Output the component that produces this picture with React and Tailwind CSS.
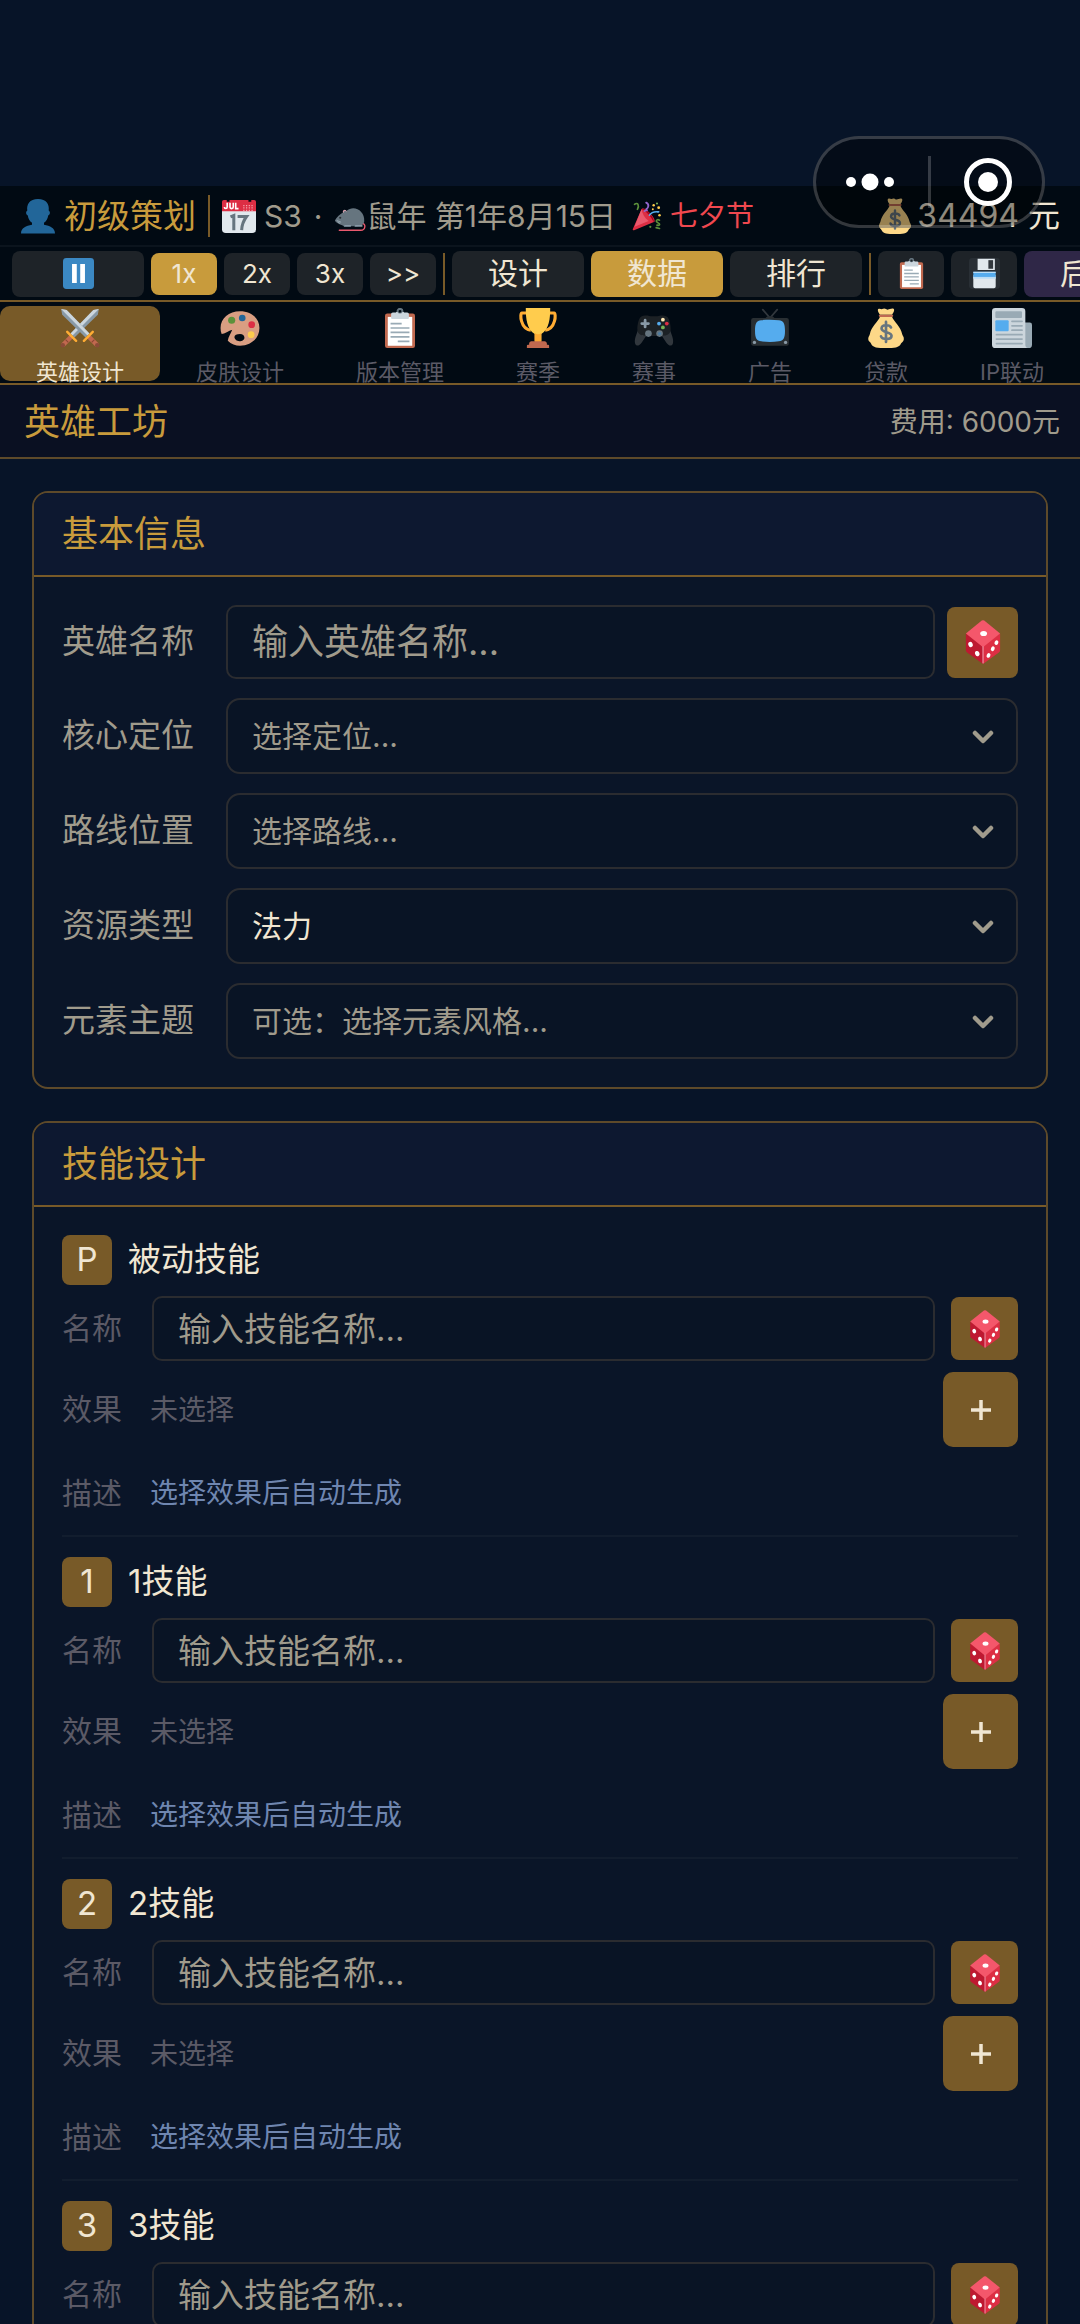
import React, { useState } from 'react';
import { clsx } from 'clsx';

const PersonIcon = ({ className }) => (
  <svg viewBox="0 0 36 36" className={className} aria-hidden="true">
    <path fill="#226699" d="M24 26.8v-2.1c2.3-1.6 3.8-4.2 4.2-7.3.9-.2 1.7-1.3 1.7-2.6 0-1-.5-1.9-1.2-2.3C29.600 6.500 26.500 1 18 1S6.400 6.500 7.300 12.500c-.7.4-1.200 1.300-1.200 2.300 0 1.300.8 2.400 1.700 2.600.4 3.100 1.900 5.700 4.200 7.300v2.100C6 28 1 30 1 35.500h34C35 30 30 28 24 26.800z" />
  </svg>
);

const CalendarIcon = ({ className }) => (
  <svg viewBox="0 0 36 36" className={className} aria-hidden="true">
    <path fill="#e1e8ed" d="M0 11h36v21a4 4 0 0 1-4 4H4a4 4 0 0 1-4-4z" />
    <path fill="#dd2e44" d="M2 1h3v2h3V1h20v2h3V1h3a2 2 0 0 1 2 2v10H0V3a2 2 0 0 1 2-2z" />
    <path fill="none" stroke="#fff" strokeWidth="1.700" d="M5.500 4v4.500a1.500 1.500 0 0 1-3 0M8.500 4v4.500a1.700 1.700 0 0 0 3.400 0V4M14.500 4v6.200h3" />
    <path stroke="#f4a3ad" strokeWidth="1.300" strokeDasharray="1.300 1.600" d="M22.500 7H34M22.500 9.500H34M22.500 12H34" />
    <path fill="none" stroke="#66757f" strokeWidth="3.200" d="M9 19l3.500-1.500V33M16.500 18.500h9.500c-3 4-5 8.500-5.200 14.500" />
  </svg>
);

const RatIcon = ({ className }) => (
  <svg viewBox="0 0 36 36" className={className} aria-hidden="true">
    <path fill="none" stroke="#ea596e" strokeWidth="1.600" strokeLinecap="round" d="M6 34h24c6 0 6-8 1.500-7.500" />
    <path fill="#66757f" d="M1 23c2-4 6-7 9-9 1-3 3-3 4-1.500C22 5 35 12 34 24c-.3 4-4 5.500-8 5.500H11C8 27 3 27 1 23z" />
    <circle cx="12" cy="13" r="2" fill="#dba2b0" />
    <circle cx="12.500" cy="14" r="1.500" fill="#66757f" />
    <circle cx="7" cy="20" r="1.200" fill="#292f33" />
    <path stroke="#99aab5" d="M3 23l5 2M4 24.500l3 2" />
    <path fill="#8899a6" d="M12 28h7v2h-8zM24 28h8v2h-9z" />
  </svg>
);

const PartyIcon = ({ className }) => (
  <svg viewBox="0 0 36 36" className={className} aria-hidden="true">
    <path fill="#dd2e44" d="M11.500 9.500L1 33.500c-.5 1.200.5 2 1.500 1.500L27 25c1-3-2-7-6-11s-7-6-9.500-4.500z" />
    <path fill="#ea596e" d="M11.500 9.500L3 31l17-7c-5-4-8-9-8.500-14.500z" />
    <path fill="#a0041e" d="M26 25.500c1-3-1.500-7.500-5.500-11.500s-8-6-9.500-4c3-.5 12 8 15 15.500z" />
    <path fill="none" stroke="#5c913b" strokeWidth="2" strokeLinecap="round" d="M3 4c4-3 6 1 3.500 6M33 23c-4-2-5 2-2 3s3 4-1 3M29 32l4 1" />
    <path fill="none" stroke="#9266cc" strokeWidth="2.200" strokeLinecap="round" d="M17 2c4 2 3 6 0 8M15 12l3-1" />
    <path fill="none" stroke="#55acee" strokeWidth="2" strokeLinecap="round" d="M21 17c3-5 7-4 11-4" />
    <g fill="#ffcc4d">
      <circle cx="26" cy="5" r="1.500" />
      <circle cx="32" cy="8" r="1.700" />
      <circle cx="25" cy="10" r="1.200" />
      <circle cx="33" cy="17" r="1.500" />
    </g>
    <circle cx="30" cy="3" r="1.300" fill="#77b255" />
    <circle cx="22" cy="31" r="1.300" fill="#5c913b" />
  </svg>
);

const MoneyIcon = ({ className }) => (
  <svg viewBox="0 0 36 36" className={className} aria-hidden="true">
    <path fill="#fdd888" d="M11 1c1.500-1 2.500.3 3.500 0s2-1 3.500 0 2.500.2 3.500 0 2.500-1 3.500 0-.5 4-1.500 5H12.500C11.500 5 10 2 11 1zM12.500 8h11c1.500 4 8 9 9 15.500.3 1.700 2 2.500 1.500 5-.4 2-1.800 2-2.500 3.500-1.500 4-6 4-13.500 4s-12 0-13.500-4C3.800 30.500 2 30 2 28s1.200-3 1.500-4.500C4.500 17 11 12 12.500 8z" />
    <path stroke="#bf6952" strokeWidth="2" strokeLinecap="round" d="M12.500 7h11" />
    <path fill="none" stroke="#67757f" strokeWidth="2.400" strokeLinecap="round" d="M22.500 17.500c-1-2.500-8.500-3-8.500 1s9 2.500 9 6.500-8.500 3.500-9.500.5M18 12.500v18" />
  </svg>
);

const ClipboardIcon = ({ className }) => (
  <svg viewBox="0 0 36 36" className={className} aria-hidden="true">
    <rect x="4.500" y="5" width="27" height="31" rx="2" fill="#c1694f" />
    <path fill="#fff" d="M7 8h22v26H7z" />
    <circle cx="18" cy="3" r="2.200" fill="none" stroke="#66757f" strokeWidth="1.800" />
    <path fill="#ccd6dd" d="M14.500 3.500h1.200a2.500 2.500 0 0 0 4.600 0h1.200V4h3a1.500 1.500 0 0 1 1.500 1.500V9a1 1 0 0 1-1 1H11a1 1 0 0 1-1-1V5.500A1.500 1.500 0 0 1 11.500 4h3z" />
    <path stroke="#99aab5" strokeWidth="1.500" d="M9.500 14h10M9.500 18h17M9.500 22h17M9.500 26h17M16 30h10.500" />
  </svg>
);

const FloppyIcon = ({ className }) => (
  <svg viewBox="0 0 36 36" className={className} aria-hidden="true">
    <path fill="#31373d" d="M4 0h28a4 4 0 0 1 4 4v28a4 4 0 0 1-4 4H4a4 4 0 0 1-4-4V4a4 4 0 0 1 4-4z" opacity=".6" />
    <path fill="#e1e8ed" d="M10 1h20v13H10zM5 20h26v13a2 2 0 0 1-2 2H7a2 2 0 0 1-2-2z" />
    <path fill="#31373d" d="M22.500 2.500H28v10h-5.500z" />
    <path fill="#55acee" d="M5 16h26v6H5z" />
    <path fill="#bbddf5" d="M5 16h26v1.500H5zM5 22h26v2H5z" />
  </svg>
);

const SwordsIcon = ({ className }) => (
  <svg viewBox="0 0 36 36" className={className} aria-hidden="true">
    {[false, true].map((flip) => (
      <g key={String(flip)} transform={flip ? 'translate(36 0) scale(-1 1)' : undefined}>
        <path fill="#8899a6" d="M35 1l-5 .8L9.500 23l3.500 3.500L34 6z" />
        <path fill="#ccd6dd" d="M35 1l-5 .8L9.500 23l1.800 1.800z" />
        <path stroke="#c1694f" strokeWidth="4" strokeLinecap="round" d="M9.500 26.500L3 33" />
        <path stroke="#ffac33" strokeWidth="2.200" strokeLinecap="round" d="M6.500 21.500l8 8" />
        <path stroke="#8a4633" strokeWidth="1" d="M5 28.500l2.500 2.500" />
        <circle cx="2.500" cy="33.500" r="2" fill="#8a4b38" />
      </g>
    ))}
  </svg>
);

const PaletteIcon = ({ className }) => (
  <svg viewBox="0 0 36 36" className={className} aria-hidden="true">
    <path fill="#d99e82" fillRule="evenodd" d="M18 3C8 3 .5 9.500.5 18c0 2 .3 3.800 1 5.500 2.500-.5 6.500-3 9.500-4-1 3-3.500 6-4 10C10 32.500 14 34 18 34c10 0 17.500-7 17.500-16S28 3 18 3zm0 20.500c2.500 0 4 1.500 4 3.200S20 30 17.500 30s-4.500-2-4.500-3.800 2-2.700 5-2.700z" />
    <circle cx="10.500" cy="11" r="3.200" fill="#5c913b" />
    <circle cx="20" cy="9" r="3" fill="#226699" />
    <circle cx="28.500" cy="15" r="3" fill="#dd2e44" />
    <circle cx="28" cy="24" r="3" fill="#ffcc4d" />
  </svg>
);

const TrophyIcon = ({ className }) => (
  <svg viewBox="0 0 36 36" className={className} aria-hidden="true">
    <path fill="none" stroke="#ffac33" strokeWidth="2.800" d="M9 4.500H3.500c-2 0-1.500 14.500 8 15.500M27 4.500h5.500c2 0 1.500 14.500-8 15.500" />
    <path fill="#ffcc4d" d="M7 0h22c0 10-1 19-8 23.500V30h-6v-6.500C8 19 7 10 7 0z" />
    <path fill="#ffac33" d="M15 22.500c2 1.500 4 1.500 6 0V31h-6z" />
    <path fill="#c1694f" d="M12 30h12c1 0 2 1 2 2v1h1a1 1 0 0 1 1 1v2H8v-2a1 1 0 0 1 1-1h1v-1c0-1 1-2 2-2z" />
  </svg>
);

const GamepadIcon = ({ className }) => (
  <svg viewBox="0 0 36 36" className={className} aria-hidden="true">
    <path fill="#31373d" d="M4 19C2 24 0 29 1 32s4 2 6-1l4-6h14l4 6c2 3 5 4 6 1s-1-8-3-13z" />
    <path fill="#1c2125" d="M6 8c2-1 5-1.500 7-1 1 .7 9 .7 10 0 2-.5 5 0 7 1 2 2 3 7 3 11 0 5-4 6-7 6H10c-3 0-7-1-7-6 0-4 1-9 3-11z" />
    <path stroke="#8899a6" strokeWidth="2.500" strokeLinecap="round" d="M10 11v6M7 14h6" />
    <circle cx="13" cy="23" r="3" fill="#66757f" />
    <circle cx="23" cy="23" r="3" fill="#66757f" />
    <circle cx="23" cy="23" r="1.500" fill="#4c7ba0" />
    <circle cx="26" cy="10.500" r="1.700" fill="#ffe8b6" />
    <circle cx="29.500" cy="14" r="1.700" fill="#dd2e44" />
    <circle cx="26" cy="17.500" r="1.700" fill="#77b255" />
    <circle cx="22.500" cy="14" r="1.700" fill="#55acee" />
  </svg>
);

const TvIcon = ({ className }) => (
  <svg viewBox="0 0 36 36" className={className} aria-hidden="true">
    <path fill="none" stroke="#31373d" strokeWidth="1.600" strokeLinecap="round" d="M11.500 1.500L18 9l6.500-7.500" />
    <path fill="#292f33" d="M14 9c1-2.500 7-2.500 8 0h11a2 2 0 0 1 2 2v21a2 2 0 0 1-2 2H3a2 2 0 0 1-2-2V11a2 2 0 0 1 2-2z" />
    <path fill="#55acee" d="M10 11c5-.7 11-.7 16 0 4 .5 5.500 2.500 5.500 9.500S30 29.500 26 30c-5 .7-11 .7-16 0-4-.5-5.500-2.500-5.500-9.500S6 11.500 10 11z" />
    <circle cx="4" cy="31" r="1.500" fill="#8899a6" />
    <circle cx="32" cy="31" r="1.500" fill="#8899a6" />
  </svg>
);

const NewsIcon = ({ className }) => (
  <svg viewBox="0 0 36 36" className={className} aria-hidden="true">
    <path fill="#99aab5" d="M26 13h8a2 2 0 0 1 2 2v18a3 3 0 0 1-3 3h-7z" />
    <path fill="#ccd6dd" d="M3 0h24a3 3 0 0 1 3 3v30c0 1.500.8 3 2.500 3H3a3 3 0 0 1-3-3V3a3 3 0 0 1 3-3z" />
    <rect x="3" y="3" width="24" height="6" rx="1" fill="#99aab5" />
    <rect x="3" y="11" width="12" height="10" rx="1" fill="#55acee" />
    <path stroke="#99aab5" strokeWidth="1.600" strokeLinecap="round" d="M18 12h9M18 16h9M18 20h9M4 24h23M4 28h23M4 32h23" />
  </svg>
);

const DiceIcon = ({ className }) => (
  <svg viewBox="0 0 36 36" className={className} aria-hidden="true">
    <path fill="#be1931" d="M4 11l14 9.500V36L5 26.500a2 2 0 0 1-1-1.700z" />
    <path fill="#dd2e44" d="M32 11l-14 9.500V36l13-9.500a2 2 0 0 0 1-1.700z" />
    <path fill="#f4576b" d="M17 .5a2 2 0 0 1 2 0L32 11l-13 10.500a2 2 0 0 1-2 0L4 11z" />
    <path stroke="#f4abba" strokeWidth=".8" d="M18 21.500V35.500" />
    <g fill="#fff">
      <ellipse cx="18.500" cy="11" rx="2.800" ry="2.100" />
      <ellipse cx="7.800" cy="20" rx="1.800" ry="2.200" transform="rotate(-20 7.800 20)" />
      <ellipse cx="13.300" cy="27.500" rx="1.800" ry="2.200" transform="rotate(-20 13.300 27.500)" />
      <ellipse cx="29" cy="18.500" rx="1.500" ry="2" transform="rotate(25 29 18.500)" />
      <ellipse cx="26" cy="23.500" rx="1.500" ry="2" transform="rotate(25 26 23.500)" />
      <ellipse cx="22.500" cy="29" rx="1.500" ry="2" transform="rotate(25 22.500 29)" />
    </g>
  </svg>
);

const PauseIcon = ({ className }) => (
  <svg viewBox="0 0 36 36" className={className} aria-hidden="true">
    <rect width="36" height="36" rx="4" fill="#3b88c3" />
    <path fill="#fff" d="M10.500 7h5.500v22h-5.500zM20 7h5.500v22H20z" />
  </svg>
);

const tabs = [
  { label: '英雄设计', icon: SwordsIcon },
  { label: '皮肤设计', icon: PaletteIcon },
  { label: '版本管理', icon: ClipboardIcon },
  { label: '赛季', icon: TrophyIcon },
  { label: '赛事', icon: GamepadIcon },
  { label: '广告', icon: TvIcon },
  { label: '贷款', icon: MoneyIcon },
  { label: 'IP联动', icon: NewsIcon },
];

const selectFields = [
  { id: 'role', label: '核心定位', placeholder: '选择定位...', options: ['战士', '法师', '坦克'], value: '' },
  { id: 'lane', label: '路线位置', placeholder: '选择路线...', options: ['上路', '中路', '下路'], value: '' },
  { id: 'resource', label: '资源类型', options: ['法力', '能量', '怒气'], value: '法力' },
  { id: 'element', label: '元素主题', placeholder: '可选：选择元素风格...', options: ['火焰', '冰霜', '雷电'], value: '' },
];

const skills = [
  { key: 'P', title: '被动技能' },
  { key: '1', title: '1技能' },
  { key: '2', title: '2技能' },
  { key: '3', title: '3技能' },
];

const Capsule = () => (
  <div className="absolute right-[35px] top-[136px] flex h-[92px] w-[232px] items-center rounded-full border-3 border-white/20 bg-black/40">
    <button aria-label="更多" className="flex h-full flex-1 items-center justify-center pr-1">
      <svg viewBox="0 0 48 20" className="h-5 w-12" fill="#fff">
        <circle cx="5" cy="10" r="5" />
        <circle cx="24" cy="10" r="8.500" />
        <circle cx="43" cy="10" r="5" />
      </svg>
    </button>
    <span className="h-[52px] w-[3px] bg-white/20" />
    <button aria-label="关闭" className="flex h-full flex-1 items-center justify-center pl-1">
      <svg viewBox="0 0 50 50" className="size-[50px]">
        <circle cx="25" cy="25" r="21.500" fill="none" stroke="#fff" strokeWidth="5" />
        <circle cx="25" cy="25" r="10" fill="#fff" />
      </svg>
    </button>
  </div>
);

const StatusBar = () => (
  <div className="flex h-[61px] flex-none items-center border-b-2 border-[#0b141d] bg-[#010a13] px-5 text-[30px] leading-10 text-[#a09b8c]">
    <PersonIcon className="mr-2 size-9" />
    <span className="text-[33px] text-[#c89b3c]">初级策划</span>
    <span className="mx-3 h-[42px] w-[2px] bg-[#785a28]" />
    <CalendarIcon className="mr-2 size-[34px]" />
    <span>S3</span>
    <span className="px-3">·</span>
    <RatIcon className="size-8" />
    <span>鼠年 第1年8月15日</span>
    <PartyIcon className="ml-4 mr-2 size-[30px]" />
    <span className="text-[28px] text-[#f0484f]">七夕节</span>
    <span className="ml-auto flex items-center text-[32px] text-[#f0e6d2]">
      <MoneyIcon className="mr-1 size-9" />
      34494 元
    </span>
  </div>
);

const ToolButton = ({ size = 'lg', active, accent, label, onClick, children }) => (
  <button
    aria-label={label}
    onClick={onClick}
    className={clsx(
      'flex flex-none items-center justify-center rounded-lg text-[#f0e6d2]',
      size === 'lg' && 'h-[46px] w-[132px] text-[30px]',
      size === 'sm' && 'h-[42px] w-[66px] text-[26px]',
      size === 'icon' && 'h-[46px] w-[66px]',
      active ? 'bg-[#c89b3c]' : accent ? 'bg-[#2f2747]' : 'bg-[#1e2328]'
    )}
  >
    {children}
  </button>
);

const Divider = () => <span className="h-[42px] w-[2px] flex-none bg-[#785a28]" />;

const Toolbar = () => {
  const [speed, setSpeed] = useState('1x');
  return (
    <div className="flex h-[55px] flex-none items-center gap-[7px] overflow-hidden border-b-2 border-[#785a28] bg-[#010a13] pl-3">
      <ToolButton label="暂停"><PauseIcon className="size-[31px]" /></ToolButton>
      {['1x', '2x', '3x', '>>'].map((s) => (
        <ToolButton key={s} size="sm" active={s === speed} onClick={() => setSpeed(s)}>{s}</ToolButton>
      ))}
      <Divider />
      <ToolButton>设计</ToolButton>
      <ToolButton active>数据</ToolButton>
      <ToolButton>排行</ToolButton>
      <Divider />
      <ToolButton size="icon" label="日志"><ClipboardIcon className="size-[31px]" /></ToolButton>
      <ToolButton size="icon" label="存档"><FloppyIcon className="size-[31px]" /></ToolButton>
      <ToolButton accent>后台</ToolButton>
    </div>
  );
};

const TabBar = () => {
  const [active, setActive] = useState('英雄设计');
  return (
    <nav className="flex h-[83px] flex-none overflow-hidden border-b-2 border-[#785a28] bg-[#010a13] pt-1">
      {tabs.map(({ label, icon: Icon }) => (
        <button
          key={label}
          onClick={() => setActive(label)}
          className={clsx(
            'flex h-[75px] flex-none flex-col items-center rounded-[10px] px-9 pt-[2px]',
            active === label ? 'bg-[#785a28] text-[#f0e6d2]' : 'text-[#5b5a66]'
          )}
        >
          <Icon className="size-10 flex-none" />
          <span className="mt-2 text-[22px] leading-8">{label}</span>
        </button>
      ))}
    </nav>
  );
};

const Card = ({ title, children }) => (
  <section className="flex-none overflow-hidden rounded-2xl border-2 border-[#5e4a2a] bg-[#0a1528]">
    <h2 className="flex h-[84px] items-center border-b-2 border-[#785a28] bg-[#0d1830] px-7 text-[36px] text-[#c89b3c]">{title}</h2>
    {children}
  </section>
);

const SelectField = ({ field }) => {
  const [value, setValue] = useState(field.value);
  return (
    <div className="flex items-center">
      <label htmlFor={field.id} className="w-[164px] flex-none text-[33px] text-[#a09b8c]">{field.label}</label>
      <div className="relative flex-1">
        <select
          id={field.id}
          value={value}
          onChange={(e) => setValue(e.target.value)}
          className={clsx(
            'block h-[76px] w-full appearance-none rounded-[14px] border-2 border-[#2b2c30] bg-[#091425] px-6 text-[30px]',
            value ? 'text-[#f0e6d2]' : 'text-[#a09b8c]'
          )}
        >
          {field.placeholder && <option value="">{field.placeholder}</option>}
          {field.options.map((o) => <option key={o} value={o}>{o}</option>)}
        </select>
        <svg viewBox="0 0 22 14" className="pointer-events-none absolute right-6 top-8 h-[14px] w-[22px]">
          <path d="M3 3l8 8 8-8" fill="none" stroke="#a09b8c" strokeWidth="4.500" strokeLinecap="round" strokeLinejoin="round" />
        </svg>
      </div>
    </div>
  );
};

const SkillBlock = ({ skill }) => (
  <div className="flex flex-col gap-[11px] border-b-2 border-[#121d2e] pb-[7px] text-[28px] text-[#5b5a66]">
    <h3 className="flex items-center gap-4 text-[33px] text-[#f0e6d2]">
      <span className="flex size-[50px] items-center justify-center rounded-lg bg-[#785a28]">{skill.key}</span>
      {skill.title}
    </h3>
    <div className="flex items-center">
      <label htmlFor={`skill-${skill.key}`} className="w-[90px] flex-none text-[30px]">名称</label>
      <input
        id={`skill-${skill.key}`}
        placeholder="输入技能名称..."
        className="h-[65px] min-w-0 flex-1 rounded-[10px] border-2 border-[#2b2c30] bg-[#091425] px-6 text-[33px] text-[#f0e6d2] placeholder:text-[#a09b8c]"
      />
      <button aria-label="随机名称" className="ml-4 flex h-[63px] w-[67px] items-center justify-center rounded-lg bg-[#785a28]">
        <DiceIcon className="size-[38px]" />
      </button>
    </div>
    <div className="flex items-center">
      <span className="w-[88px] flex-none text-[30px]">效果</span>
      <span>未选择</span>
      <button aria-label="添加效果" className="ml-auto flex size-[75px] items-center justify-center rounded-[10px] bg-[#785a28]">
        <svg viewBox="0 0 20 20" className="size-5">
          <path d="M10 0v20M0 10h20" stroke="#f0e6d2" strokeWidth="3.500" />
        </svg>
      </button>
    </div>
    <div className="flex h-[70px] items-center">
      <span className="w-[88px] flex-none text-[30px]">描述</span>
      <span className="text-[#6f86b0]">选择效果后自动生成</span>
    </div>
  </div>
);

export default function App() {
  return (
    <div className="relative flex h-screen flex-col overflow-hidden bg-[#071428] pt-[186px] font-['Inter','Noto_Sans_CJK_SC',sans-serif]">
      <StatusBar />
      <Toolbar />
      <TabBar />
      <header className="flex h-[74px] flex-none items-center justify-between border-b-2 border-[#5e4a2a] bg-[#0a1022] pl-6 pr-5 pt-[2px]">
        <h1 className="text-[36px] text-[#c89b3c]">英雄工坊</h1>
        <span className="text-[28px] text-[#a09b8c]">费用: 6000元</span>
      </header>
      <main className="flex min-h-0 flex-1 flex-col gap-8 overflow-y-auto px-8 py-8 [scrollbar-width:none]">
        <Card title="基本信息">
          <div className="flex flex-col gap-[19px] px-7 pb-7 pt-7">
            <div className="flex items-center">
              <label htmlFor="hero-name" className="w-[164px] flex-none text-[33px] text-[#a09b8c]">英雄名称</label>
              <input
                id="hero-name"
                placeholder="输入英雄名称..."
                className="h-[74px] min-w-0 flex-1 rounded-[10px] border-2 border-[#2b2c30] bg-[#091425] px-6 text-[36px] text-[#f0e6d2] placeholder:text-[#a09b8c]"
              />
              <button aria-label="随机名称" className="ml-3 flex size-[71px] items-center justify-center rounded-lg bg-[#785a28]">
                <DiceIcon className="size-11" />
              </button>
            </div>
            {selectFields.map((f) => <SelectField key={f.id} field={f} />)}
          </div>
        </Card>
        <Card title="技能设计">
          <div className="flex flex-col gap-5 px-7 pb-6 pt-7">
            {skills.map((s) => <SkillBlock key={s.key} skill={s} />)}
          </div>
        </Card>
      </main>
      <Capsule />
    </div>
  );
}
